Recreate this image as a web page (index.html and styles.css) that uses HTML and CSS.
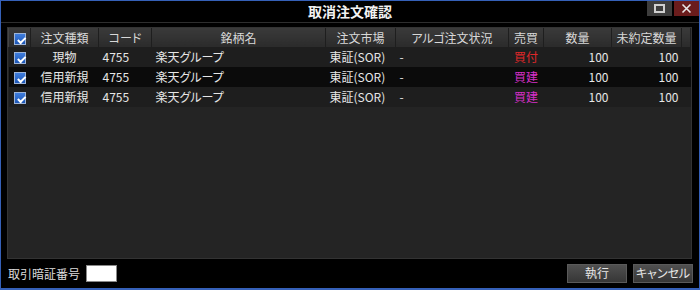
FILE: index.html
```html
<!DOCTYPE html>
<html lang="ja">
<head>
<meta charset="utf-8">
<link rel="stylesheet" href="styles.css">
</head>
<body>
<div class="window">
  <div class="titlebar">
    <div class="title">取消注文確認</div>
    <div class="controls">
      <div class="ctl max"><span class="sq"></span></div>
      <div class="ctl close">
        <svg width="11" height="11" viewBox="0 0 11 11"><path d="M1.5 1.5 L9.5 9.5 M9.5 1.5 L1.5 9.5" stroke="#e8e8e8" stroke-width="1.6"/></svg>
      </div>
    </div>
  </div>
  <div class="grid">
    <table>
      <colgroup>
        <col class="c0"><col class="c1"><col class="c2"><col class="c3"><col class="c4"><col class="c5"><col class="c6"><col class="c7"><col class="c8"><col>
      </colgroup>
      <thead>
        <tr>
          <th><span class="chk"></span></th>
          <th>注文種類</th><th>コード</th><th>銘柄名</th><th>注文市場</th><th>アルゴ注文状況</th><th>売買</th><th>数量</th><th>未約定数量</th><th></th>
        </tr>
      </thead>
      <tbody>
        <tr class="odd">
          <td class="ctr"><span class="chk"></span></td>
          <td class="ctr">現物</td><td class="lft">4755</td><td class="lft">楽天グループ</td><td class="lft">東証(SOR)</td><td class="lft">-</td><td class="ctr buy">買付</td><td class="rgt">100</td><td class="rgt">100</td><td></td>
        </tr>
        <tr class="even">
          <td class="ctr"><span class="chk"></span></td>
          <td class="ctr">信用新規</td><td class="lft">4755</td><td class="lft">楽天グループ</td><td class="lft">東証(SOR)</td><td class="lft">-</td><td class="ctr margin">買建</td><td class="rgt">100</td><td class="rgt">100</td><td></td>
        </tr>
        <tr class="odd">
          <td class="ctr"><span class="chk"></span></td>
          <td class="ctr">信用新規</td><td class="lft">4755</td><td class="lft">楽天グループ</td><td class="lft">東証(SOR)</td><td class="lft">-</td><td class="ctr margin">買建</td><td class="rgt">100</td><td class="rgt">100</td><td></td>
        </tr>
      </tbody>
    </table>
  </div>
  <div class="footer">
    <div class="pin">
      <span class="label">取引暗証番号</span>
      <span class="input"></span>
    </div>
    <div class="buttons">
      <button class="btn">執行</button>
      <button class="btn">キャンセル</button>
    </div>
  </div>
</div>
</body>
</html>
```
FILE: styles.css
```css
* { box-sizing: border-box; }
html, body { margin: 0; padding: 0; background: #000; }
body {
  font-family: "Noto Sans CJK JP", "Noto Sans", sans-serif;
  font-size: 12px;
  color: #e6e6e6;
  font-feature-settings: "palt";
}
.window {
  width: 700px;
  height: 290px;
  border: 1px solid #3560b8;
  border-bottom-width: 2px;
  background: #000;
  display: flex;
  flex-direction: column;
}
.titlebar {
  height: 22px;
  position: relative;
  border-bottom: 1px solid #2e2e2e;
  flex: none;
}
.title {
  text-align: center;
  font-weight: bold;
  font-size: 14px;
  line-height: 21px;
  color: #f2f2f2;
}
.controls {
  position: absolute;
  top: 0;
  right: 0;
  display: flex;
  gap: 2px;
}
.ctl {
  width: 25px;
  height: 15px;
  display: flex;
  align-items: center;
  justify-content: center;
}
.ctl.max { background: #3d3d3d; }
.ctl.close { background: #6a1c1c; }
.sq {
  width: 11px;
  height: 9px;
  border: 2px solid #cfcfcf;
}
.grid {
  margin: 4px 7px 0 6px;
  height: 232px;
  border: 1px solid #333;
  background: #242424;
  flex: none;
  overflow: hidden;
}
table {
  border-collapse: collapse;
  table-layout: fixed;
  width: 100%;
}
col.c0 { width: 22px; }
col.c1 { width: 68px; }
col.c2 { width: 53px; }
col.c3 { width: 174px; }
col.c4 { width: 70px; }
col.c5 { width: 113px; }
col.c6 { width: 35px; }
col.c7 { width: 68px; }
col.c8 { width: 70px; }
th {
  height: 19px;
  padding: 0;
  font-weight: normal;
  color: #d8d8d8;
  background: linear-gradient(#3a3a3a, #2b2b2b);
  border-right: 1px solid #1e1e1e;
  border-left: 1px solid #454545;
  text-align: center;
  white-space: nowrap;
  line-height: 19px;
}
td {
  height: 20px;
  padding: 0 4px;
  white-space: nowrap;
  line-height: 20px;
}
tr.odd td { background: #1e1e1e; }
tr.even td { background: #0b0b0b; }
.ctr { text-align: center; }
.lft { text-align: left; }
.rgt { text-align: right; padding-right: 3px; }
td:first-child, th:first-child { padding: 0; text-align: center; }
.buy { color: #e0282a; }
.margin { color: #d42fc6; }
.chk {
  display: inline-block;
  width: 12px;
  height: 12px;
  vertical-align: middle;
  margin-top: -2px;
  border: 1px solid #9db4d8;
  background: linear-gradient(#3f7ddc, #1c56b6);
  position: relative;
}
.chk::after {
  content: "";
  position: absolute;
  left: 2px;
  top: 1px;
  width: 6px;
  height: 3px;
  border-left: 2px solid #fff;
  border-bottom: 2px solid #fff;
  transform: rotate(-45deg) translate(-1px, 2px);
}
.footer {
  flex: 1;
  display: flex;
  align-items: center;
  justify-content: space-between;
  padding: 0 6px 1px 7px;
}
.pin { display: flex; align-items: center; gap: 6px; }
.label { color: #dcdcdc; font-size: 12px; }
.input {
  width: 31px;
  height: 17px;
  background: #fff;
  border: 1px solid #888;
}
.buttons { display: flex; gap: 6px; }
.btn {
  width: 60px;
  height: 19px;
  padding: 0;
  font-family: inherit;
  font-size: 12px;
  font-feature-settings: "palt";
  white-space: nowrap;
  color: #e6e6e6;
  background: linear-gradient(#505050, #363636);
  border: 1px solid #5a5a5a;
  line-height: 16px;
}
```
